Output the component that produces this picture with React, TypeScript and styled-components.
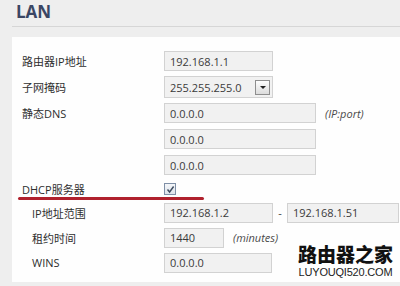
import styled, { createGlobalStyle } from 'styled-components';

const GlobalStyle = createGlobalStyle`
  body {
    margin: 0;
    background: #eeeeee;
    font-family: "Open Sans", "Noto Sans CJK SC", sans-serif;
  }
`;

const Page = styled.div`
  width: 400px;
  height: 286px;
  position: relative;
  overflow: hidden;
  background: #eeeeee;
`;

const Header = styled.div`
  margin-left: 12px;
  height: 27px;
  border-bottom: 1px solid #d6d6d6;
  box-sizing: border-box;
  padding: 1px 0 0 4px;
`;

const Title = styled.h1`
  margin: 0;
  font-family: "Open Sans", sans-serif;
  font-size: 17px;
  font-weight: 700;
  line-height: 22px;
  color: #3a4664;
`;

const Panel = styled.div`
  margin: 10px 0 0 12px;
  height: 245px;
  background: #fefefe;
  box-sizing: border-box;
  padding: 11px 0 0 10px;
  display: flex;
  flex-direction: column;
`;

const Row = styled.div<{ $h: number }>`
  position: relative;
  display: flex;
  align-items: center;
  height: ${(p) => p.$h}px;
`;

const Label = styled.div<{ $indent?: boolean }>`
  width: ${(p) => (p.$indent ? 132 : 142)}px;
  padding-left: ${(p) => (p.$indent ? 10 : 0)}px;
  flex-shrink: 0;
  font-family: "Open Sans", "Noto Sans CJK SC", sans-serif;
  font-size: 11px;
  color: #2e2e2e;
`;

const Input = styled.div<{ $w: number }>`
  width: ${(p) => p.$w}px;
  height: 20px;
  box-sizing: border-box;
  border: 1px solid #d2d2d2;
  background: #f1f1f1;
  padding-left: 5px;
  display: flex;
  align-items: center;
  font-size: 11px;
  color: #3a3a3a;
  flex-shrink: 0;
`;

const Select = styled(Input)`
  height: 22px;
  justify-content: space-between;
  padding-right: 2px;
`;

const DropButton = styled.div`
  width: 15px;
  height: 15px;
  box-sizing: border-box;
  border: 1px solid #8e8e8e;
  background: linear-gradient(#fdfdfd, #dcdcdc);
  display: flex;
  align-items: center;
  justify-content: center;

  &::after {
    content: '';
    border-left: 3px solid transparent;
    border-right: 3px solid transparent;
    border-top: 3px solid #222;
  }
`;

const Hint = styled.span`
  margin-left: 9px;
  font-size: 11px;
  font-style: italic;
  color: #4a4a4a;
`;

const Dash = styled.span`
  width: 14px;
  text-align: center;
  font-size: 11px;
  color: #444;
`;

const CheckBox = styled.div`
  width: 12px;
  height: 12px;
  box-sizing: border-box;
  border: 1px solid #7f8fa6;
  background: linear-gradient(#f4f6f9, #dde3ea);
  display: flex;
  align-items: center;
  justify-content: center;
`;

// red annotation stroke under the DHCP row
const Underline = styled.div`
  position: absolute;
  left: -4px;
  top: 19px;
  width: 186px;
  height: 3px;
  border-radius: 2px;
  background: #b0212d;
`;

const Watermark = styled.div`
  position: absolute;
  right: 7px;
  bottom: 8px;
  display: flex;
  flex-direction: column;
  align-items: center;
`;

const MarkCn = styled.div`
  font-family: "Noto Sans CJK SC", sans-serif;
  font-size: 19px;
  font-weight: 900;
  line-height: 20px;
  color: #111;
`;

const MarkEn = styled.div`
  margin-top: 2px;
  font-family: "Liberation Sans", sans-serif;
  font-size: 11px;
  line-height: 12px;
  letter-spacing: -0.2px;
  color: #222;
`;

export default function App() {
  return (
    <Page>
      <GlobalStyle />
      <Header>
        <Title>LAN</Title>
      </Header>
      <Panel>
        <Row $h={26}>
          <Label>路由器IP地址</Label>
          <Input $w={109}>192.168.1.1</Input>
        </Row>
        <Row $h={26}>
          <Label>子网掩码</Label>
          <Select $w={109}>
            255.255.255.0
            <DropButton />
          </Select>
        </Row>
        <Row $h={26}>
          <Label>静态DNS</Label>
          <Input $w={152}>0.0.0.0</Input>
          <Hint>(IP:port)</Hint>
        </Row>
        <Row $h={26}>
          <Label />
          <Input $w={152}>0.0.0.0</Input>
        </Row>
        <Row $h={26}>
          <Label />
          <Input $w={152}>0.0.0.0</Input>
        </Row>
        <Row $h={22}>
          <Label>DHCP服务器</Label>
          <CheckBox>
            <svg width="9" height="9" viewBox="0 0 9 9">
              <path d="M1.5 4.5 L3.6 7 L7.6 1.5" fill="none" stroke="#3c4a5e" strokeWidth="1.4" />
            </svg>
          </CheckBox>
          <Underline />
        </Row>
        <Row $h={25}>
          <Label $indent>IP地址范围</Label>
          <Input $w={109}>192.168.1.2</Input>
          <Dash>-</Dash>
          <Input $w={112}>192.168.1.51</Input>
        </Row>
        <Row $h={25}>
          <Label $indent>租约时间</Label>
          <Input $w={60}>1440</Input>
          <Hint>(minutes)</Hint>
        </Row>
        <Row $h={25}>
          <Label $indent>WINS</Label>
          <Input $w={108}>0.0.0.0</Input>
        </Row>
      </Panel>
      <Watermark>
        <MarkCn>路由器之家</MarkCn>
        <MarkEn>LUYOUQI520.COM</MarkEn>
      </Watermark>
    </Page>
  );
}
